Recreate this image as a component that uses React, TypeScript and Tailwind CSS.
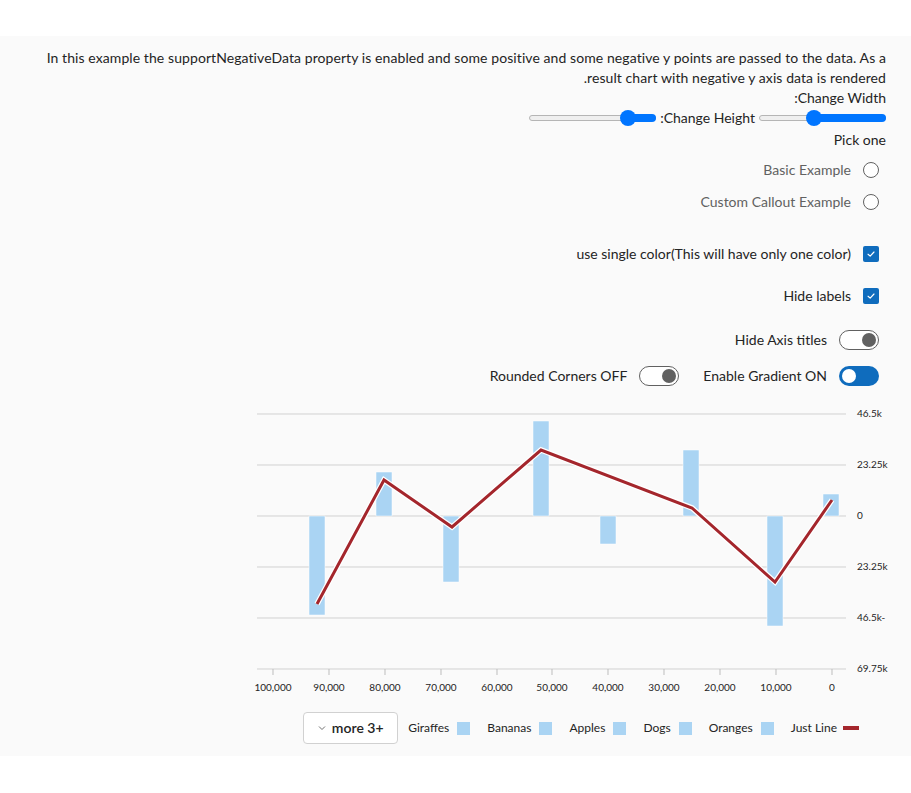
import React from 'react';

// ── Chart data ────────────────────────────────────────────────────────────────

const GRID_Y = [414, 465, 516, 567, 618, 669];
const Y_LABELS = ['46.5k', '23.25k', '0', '23.25k', '46.5k-', '69.75k'];
const X_TICKS = [
  { x: 273, label: '100,000' },
  { x: 329, label: '90,000' },
  { x: 385, label: '80,000' },
  { x: 441, label: '70,000' },
  { x: 497, label: '60,000' },
  { x: 552, label: '50,000' },
  { x: 608, label: '40,000' },
  { x: 664, label: '30,000' },
  { x: 720, label: '20,000' },
  { x: 776, label: '10,000' },
  { x: 832, label: '0' },
];
const BARS = [
  { x: 309, top: 516, bottom: 615 },
  { x: 376, top: 472, bottom: 516 },
  { x: 443, top: 516, bottom: 582 },
  { x: 533, top: 421, bottom: 516 },
  { x: 600, top: 516, bottom: 544 },
  { x: 683, top: 450, bottom: 516 },
  { x: 767, top: 516, bottom: 626 },
  { x: 823, top: 494, bottom: 516 },
];
const LINE = '317,604 384,480 452,527 541,450 692,508 775,582 832,500';

const LEGEND = ['Giraffes', 'Bananas', 'Apples', 'Dogs', 'Oranges'];

// ── Controls ──────────────────────────────────────────────────────────────────

function Slider({ thumb }: { thumb: number }) {
  // thumb = px from left edge of the 127px track
  return (
    <div className="relative h-[16px] w-[127px] shrink-0" dir="ltr">
      <div className="absolute left-0 right-0 top-[5px] h-[6px] rounded-full border border-[#b5b5b5] bg-[#efefef]" />
      <div
        className="absolute right-0 top-[4px] h-[8px] rounded-full bg-[#0075ff]"
        style={{ left: thumb }}
      />
      <div
        className="absolute top-0 h-[16px] w-[16px] rounded-full bg-[#0075ff]"
        style={{ left: thumb - 8 }}
      />
    </div>
  );
}

function Radio({ label }: { label: string }) {
  return (
    <div className="flex h-[32px] items-center gap-[12px]">
      <span className="h-[16px] w-[16px] shrink-0 rounded-full border border-[#616161] bg-white" />
      <span className="text-[#616161]">{label}</span>
    </div>
  );
}

function Checkbox({ label }: { label: string }) {
  return (
    <div className="flex h-[32px] items-center gap-[12px]">
      <span className="flex h-[16px] w-[16px] shrink-0 items-center justify-center rounded-[2px] bg-[#0f6cbd]">
        <svg width="10" height="10" viewBox="0 0 12 12" fill="none">
          <path d="M2.5 6.3 L5 8.6 L9.6 3.6" stroke="white" strokeWidth="1.4" strokeLinecap="round" strokeLinejoin="round" />
        </svg>
      </span>
      <span>{label}</span>
    </div>
  );
}

function Toggle({ label, on }: { label: string; on: boolean }) {
  return (
    <div className="flex h-[32px] items-center gap-[12px]">
      {on ? (
        <span className="flex h-[20px] w-[40px] shrink-0 items-center justify-start rounded-full bg-[#0f6cbd] px-[3px]" dir="ltr">
          <span className="h-[14px] w-[14px] rounded-full bg-white" />
        </span>
      ) : (
        <span className="flex h-[20px] w-[40px] shrink-0 items-center justify-end rounded-full border border-[#616161] bg-white px-[2px]" dir="ltr">
          <span className="h-[14px] w-[14px] rounded-full bg-[#616161]" />
        </span>
      )}
      <span>{label}</span>
    </div>
  );
}

// ── Chart ─────────────────────────────────────────────────────────────────────

function Chart() {
  return (
    <div className="mt-[8px] flex">
      <svg width="650" height="300" viewBox="236 400 650 300" className="overflow-visible [direction:ltr]">
        {GRID_Y.map((y) => (
          <line key={y} x1="257" x2="846" y1={y} y2={y} stroke="#d1d1d1" strokeWidth="1" />
        ))}
        {GRID_Y.map((y, i) => (
          <text key={i} x="857" y={y} textAnchor="start" dominantBaseline="middle" fontSize="10" fill="#242424">
            {Y_LABELS[i]}
          </text>
        ))}
        {X_TICKS.map((t) => (
          <g key={t.label}>
            <line x1={t.x} x2={t.x} y1="669" y2="675" stroke="#bdbdbd" strokeWidth="1" />
            <text x={t.x} y="688" textAnchor="middle" dominantBaseline="middle" fontSize="10" fill="#242424">
              {t.label}
            </text>
          </g>
        ))}
        {BARS.map((b) => (
          <rect
            key={b.x}
            x={b.x}
            y={b.top}
            width="16"
            height={b.bottom - b.top}
            fill="#aad4f3"
            stroke="#ffffff"
            strokeWidth="0.5"
          />
        ))}
        <polyline points={LINE} fill="none" stroke="#ffffff" strokeWidth="5.5" strokeLinejoin="miter" />
        <polyline points={LINE} fill="none" stroke="#a4262c" strokeWidth="3" strokeLinejoin="miter" />
      </svg>
    </div>
  );
}

function Legend() {
  return (
    <div className="mt-[12px] flex pr-[27px]">
      <div dir="ltr" className="flex items-center text-[12px] text-[#242424]">
        <button className="flex h-[32px] w-[95px] items-center justify-center gap-[6px] rounded-[4px] border border-[#d1d1d1] bg-white text-[14px] font-semibold">
          <svg width="8" height="6" viewBox="0 0 8 6" fill="none">
            <path d="M1 1.5 L4 4.5 L7 1.5" stroke="#616161" strokeWidth="0.9" />
          </svg>
          <span>more 3+</span>
        </button>
        {LEGEND.map((name) => (
          <div key={name} className="ml-[10px] flex items-center gap-[8px] pr-[7px]">
            <span>{name}</span>
            <span className="h-[13px] w-[13px] bg-[#aad4f3]" />
          </div>
        ))}
        <div className="ml-[10px] flex items-center gap-[6px]">
          <span>Just Line</span>
          <span className="h-[4px] w-[16px] bg-[#a4262c]" />
        </div>
      </div>
    </div>
  );
}

// ── Page ──────────────────────────────────────────────────────────────────────

export default function App() {
  return (
    <div className="min-h-[793px] bg-white pt-[36px] font-['Lato','Segoe_UI',sans-serif] text-[14px] leading-[20px] text-[#242424]">
      <div dir="rtl" className="h-[720px] bg-[#fafafa] px-[25px] pt-[12px]">
        <p className="tracking-[0.08px]">
          In this example the supportNegativeData property is enabled and some positive and some negative y points are
          passed to the data. As a result chart with negative y axis data is rendered.
        </p>
        <div>Change Width:</div>
        <div className="flex h-[20px] items-center gap-[4px]">
          <Slider thumb={55} />
          <span>Change Height:</span>
          <Slider thumb={99} />
        </div>
        <div className="mt-[2px]">Pick one</div>

        <div className="mt-[4px] pr-[7px]">
          <Radio label="Basic Example" />
          <Radio label="Custom Callout Example" />
          <div className="mt-[20px]">
            <Checkbox label="use single color(This will have only one color)" />
          </div>
          <div className="mt-[10px]">
            <Checkbox label="Hide labels" />
          </div>
          <div className="mt-[12px]">
            <Toggle label="Hide Axis titles" on={false} />
          </div>
          <div className="mt-[4px] flex gap-[24px]">
            <Toggle label="Enable Gradient ON" on={true} />
            <Toggle label="Rounded Corners OFF" on={false} />
          </div>
        </div>

        <Chart />
        <Legend />
      </div>
    </div>
  );
}
